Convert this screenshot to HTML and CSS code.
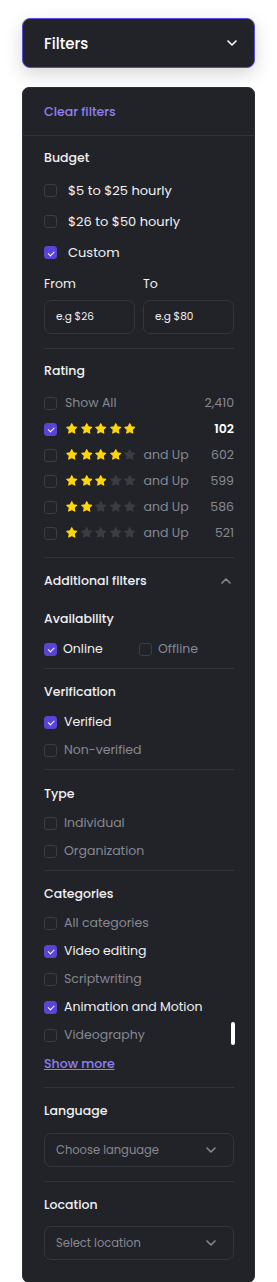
FILE: index.html
```html
<!DOCTYPE html>
<html>
	<head>
		<meta charset="utf-8">
		<title>Filters</title>
		<link rel="stylesheet" href="styles.css">
	</head>
	<body>
		<div class="wrap">
			<button class="toggle">
				<span>Filters</span>
				<svg class="chev" viewBox="0 0 10 6"><path d="M1 1l4 4 4-4"/></svg>
			</button>

			<div class="panel">
				<div class="clear"><a>Clear filters</a></div>

				<section class="sec budget">
					<h3>Budget</h3>
					<ul class="list">
						<li><span class="box"></span><span class="lbl">$5 to $25 hourly</span></li>
						<li><span class="box"></span><span class="lbl">$26 to $50 hourly</span></li>
						<li><span class="box on"></span><span class="lbl">Custom</span></li>
					</ul>
					<div class="range">
						<label><span>From</span><span class="input">e.g $26</span></label>
						<label><span>To</span><span class="input">e.g $80</span></label>
					</div>
				</section>

				<section class="sec rating">
					<h3>Rating</h3>
					<ul class="list">
						<li><span class="box"></span><span class="lbl muted">Show All</span><span class="count">2,410</span></li>
						<li><span class="box on"></span><span class="stars" data-n="5"></span><span class="count hi">102</span></li>
						<li><span class="box"></span><span class="stars" data-n="4"></span><span class="up">and Up</span><span class="count">602</span></li>
						<li><span class="box"></span><span class="stars" data-n="3"></span><span class="up">and Up</span><span class="count">599</span></li>
						<li><span class="box"></span><span class="stars" data-n="2"></span><span class="up">and Up</span><span class="count">586</span></li>
						<li><span class="box"></span><span class="stars" data-n="1"></span><span class="up">and Up</span><span class="count">521</span></li>
					</ul>
				</section>

				<section class="sec avail">
					<div class="more-head">
						<span>Additional filters</span>
						<svg class="chev up" viewBox="0 0 10 6"><path d="M1 5l4-4 4 4"/></svg>
					</div>
					<h3>Availability</h3>
					<div class="pair">
						<span class="opt"><span class="box on"></span><span class="lbl">Online</span></span>
						<span class="opt"><span class="box"></span><span class="lbl muted">Offline</span></span>
					</div>
				</section>

				<section class="sec small">
					<h3>Verification</h3>
					<ul class="list tight">
						<li><span class="box on"></span><span class="lbl">Verified</span></li>
						<li><span class="box"></span><span class="lbl muted">Non-verified</span></li>
					</ul>
				</section>

				<section class="sec small type">
					<h3>Type</h3>
					<ul class="list tight">
						<li><span class="box"></span><span class="lbl muted">Individual</span></li>
						<li><span class="box"></span><span class="lbl muted">Organization</span></li>
					</ul>
				</section>

				<section class="sec cats">
					<h3>Categories</h3>
					<ul class="list tight">
						<li><span class="box"></span><span class="lbl muted">All categories</span></li>
						<li><span class="box on"></span><span class="lbl">Video editing</span></li>
						<li><span class="box"></span><span class="lbl muted">Scriptwriting</span></li>
						<li><span class="box on"></span><span class="lbl">Animation and Motion</span></li>
						<li><span class="box"></span><span class="lbl muted">Videography</span></li>
						<span class="thumb"></span>
					</ul>
					<a class="show-more">Show more</a>
				</section>

				<section class="sec pick">
					<h3>Language</h3>
					<div class="select">
						<span>Choose language</span>
						<svg class="chev" viewBox="0 0 10 6"><path d="M1 1l4 4 4-4"/></svg>
					</div>
				</section>

				<section class="sec pick last">
					<h3>Location</h3>
					<div class="select">
						<span>Select location</span>
						<svg class="chev" viewBox="0 0 10 6"><path d="M1 1l4 4 4-4"/></svg>
					</div>
				</section>
			</div>
		</div>
		<script>
		const star = '<svg class="star" viewBox="0 0 24 24"><path d="M12 3l2.7 5.6 6.1.8-4.5 4.2 1.1 6.1L12 16.8l-5.4 2.9 1.1-6.1-4.5-4.2 6.1-.8z"/></svg>';
		for (let el of document.querySelectorAll('.stars')) {
			const n = +el.dataset.n;
			let html = '';
			for (let i = 0; i < 5; i++) {
				html += i < n ? star.replace('class="star"', 'class="star lit"') : star;
			}
			el.innerHTML = html;
		}
		</script>
	</body>
</html>
```

FILE: styles.css
```css
* {
	box-sizing: border-box;
}
body {
	background: #fff;
	color: #f1f1f3;
	font-family: Poppins, Inter, "Noto Sans", sans-serif;
	font-size: 12.5px;
	margin: 0;
}
.wrap {
	padding: 18px 22px 1px;
}
.chev {
	fill: none;
	height: 6px;
	stroke: currentColor;
	stroke-linecap: round;
	stroke-linejoin: round;
	stroke-width: 1.6;
	width: 10px;
}
.toggle {
	align-items: center;
	background: #212329;
	border: 1px solid #5b4ddb;
	border-radius: 8px;
	box-shadow: 0 6px 18px rgba(0, 0, 0, .16);
	color: #fff;
	display: flex;
	font: inherit;
	font-size: 15px;
	font-weight: 500;
	height: 50px;
	justify-content: space-between;
	padding: 0 17px 0 21px;
	width: 100%;
}
.panel {
	background: #212329;
	border: 1px solid #2c2f36;
	border-radius: 7px;
	margin-top: 19px;
}
.clear {
	align-items: center;
	border-bottom: 1px solid #30333a;
	display: flex;
	height: 48px;
	padding: 0 21px;
}
.clear a {
	color: #8f80f2;
	font-weight: 500;
}
.sec {
	border-bottom: 1px solid #30333a;
	margin: 0 20px 0 21px;
	padding: 12px 0 6px;
}
.sec h3 {
	font-size: 12.5px;
	font-weight: 500;
	line-height: 20px;
	margin: 0;
}
.list {
	list-style: none;
	margin: 6px 0 0;
	padding: 0;
	position: relative;
}
.list li {
	align-items: center;
	display: flex;
	height: 31px;
}
.list.tight li {
	height: 28px;
}
.box {
	border: 1px solid #3a3d45;
	border-radius: 3px;
	flex: none;
	height: 13px;
	position: relative;
	width: 13px;
}
.box.on {
	background: #5a44d8;
	border-color: #5a44d8;
}
.box.on:after {
	border: solid #fff;
	border-width: 0 0 1.4px 1.4px;
	content: "";
	height: 2.5px;
	left: 3.2px;
	position: absolute;
	top: 3.6px;
	transform: rotate(-45deg);
	width: 5px;
}
.lbl {
	margin-left: 7px;
}
.muted {
	color: #868991;
}
.budget .lbl {
	font-size: 13px;
	margin-left: 11px;
}
.budget .list {
	margin-top: 7px;
}
.range {
	display: flex;
	gap: 8px;
	margin-top: 6px;
	padding-bottom: 8px;
}
.range label {
	display: flex;
	flex: 1;
	flex-direction: column;
}
.range label > span:first-child {
	line-height: 20px;
	margin-bottom: 6px;
}
.input {
	align-items: center;
	border: 1px solid #33363e;
	border-radius: 7px;
	display: flex;
	font-size: 10.5px;
	height: 34px;
	padding: 0 11px;
}
.rating .list {
	margin-top: 9px;
}
.rating .list li {
	height: 26px;
}
.rating .lbl {
	margin-left: 8px;
}
.stars {
	display: flex;
	gap: 1px;
	margin-left: 8px;
}
.star {
	fill: #3a3d44;
	height: 13.5px;
	stroke: #3a3d44;
	stroke-linejoin: round;
	stroke-width: 2;
	width: 13.5px;
}
.star.lit {
	fill: #ffd60a;
	stroke: #ffd60a;
}
.up {
	color: #868991;
	margin-left: 7px;
}
.count {
	color: #868991;
	margin-left: auto;
}
.count.hi {
	color: #fff;
	font-weight: 600;
}
.rating {
	padding-bottom: 11px;
}
.avail {
	padding-top: 13px;
}
.more-head {
	align-items: center;
	display: flex;
	font-weight: 500;
	justify-content: space-between;
	line-height: 20px;
	padding-right: 3px;
}
.avail h3 {
	margin-top: 18px;
}
.pair {
	align-items: center;
	display: flex;
	height: 26px;
	margin-top: 7px;
}
.opt {
	align-items: center;
	display: flex;
	width: 100px;
}
.opt .lbl {
	margin-left: 6px;
}
.small {
	padding: 13px 0 5px;
}
.small.type {
	padding-top: 14px;
}
.type .list {
	margin-top: 5px;
}
.cats {
	padding-top: 13px;
}
.cats .list {
	margin-top: 5px;
}
.thumb {
	background: #fff;
	border-radius: 2px;
	height: 23px;
	position: absolute;
	right: -1px;
	top: 113px;
	width: 4px;
}
.show-more {
	color: #8f80f2;
	display: block;
	font-weight: 500;
	line-height: 20px;
	margin-top: 5px;
	padding-bottom: 7px;
	text-decoration: underline;
}
.pick {
	padding-top: 13px;
}
.select {
	align-items: center;
	border: 1px solid #33363e;
	border-radius: 7px;
	color: #868991;
	display: flex;
	font-size: 11.5px;
	height: 34px;
	justify-content: space-between;
	margin: 12px 0 8px;
	padding: 0 17px 0 11px;
}
.last {
	border-bottom: 0;
	padding-bottom: 14px;
}
.last .select {
	margin-top: 11px;
}
```
